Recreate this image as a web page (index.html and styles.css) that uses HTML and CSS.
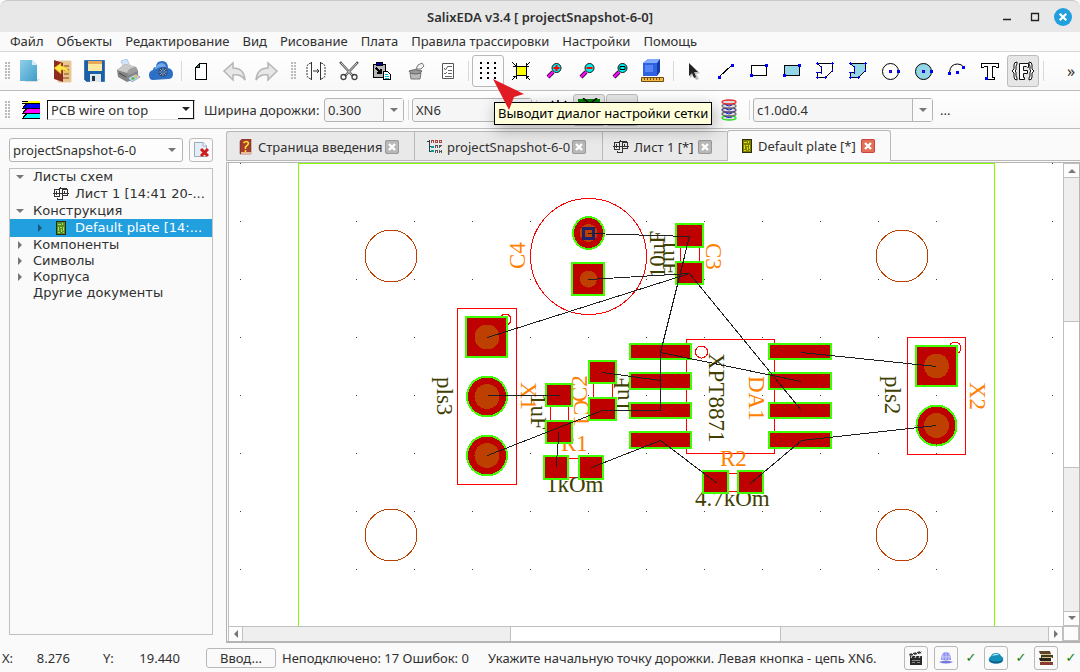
FILE: index.html
```html
<!DOCTYPE html>
<html lang="ru">
<head>
<meta charset="utf-8">
<title>SalixEDA v3.4 [ projectSnapshot-6-0]</title>
<link rel="stylesheet" href="styles.css">
</head>
<body>
<svg class="defs" aria-hidden="true">
  <defs>
    <linearGradient id="gBlue" x1="0" y1="0" x2="1" y2="1"><stop offset="0" stop-color="#8fd0ea"/><stop offset="1" stop-color="#3f9cc8"/></linearGradient>
    <pattern id="grid" x="240" y="221" width="58" height="58" patternUnits="userSpaceOnUse"><rect width="1" height="1" fill="#404040"/></pattern>
    <symbol id="sheet" viewBox="0 0 16 16"><path d="M1.500 3.500h5v7h-5zM9.500 3.500h5v6h-5zM4.500 12v1.500h5V10M0 7.500h16M3.500 5v4M11.500 5v3M7.500 1v2M6 2.500h8" fill="none" stroke="#333" shape-rendering="crispEdges"/></symbol>
    <symbol id="pcb" viewBox="0 0 12 16"><path d="M1.500 1.500h9v13h-9z" fill="var(--pcb)" stroke="#2c2c10" shape-rendering="crispEdges"/><path d="M3 4.500h3M3.500 7v4M5 7.500h2M7.500 3v2M6.500 9v3M8.500 7v4M3 12.500h2M8 12.500h1" fill="none" stroke="var(--trace)" shape-rendering="crispEdges"/></symbol>
    <symbol id="cross" viewBox="0 0 14 14"><path d="M4 4l6 6M10 4l-6 6" stroke="#fff" stroke-width="2.400"/></symbol>
  </defs>
</svg>
<header class="titlebar">
  <h1>SalixEDA v3.4 [ projectSnapshot-6-0]</h1>
  <div class="window-buttons">
    <button aria-label="Свернуть"><svg width="18" height="18"><path d="M5 11.500h8" stroke="#222" stroke-width="1.500"/></svg></button>
    <button aria-label="Развернуть"><svg width="18" height="18"><path d="M5.500 5.500h7v7h-7z" fill="none" stroke="#222" stroke-width="1.300"/></svg></button>
    <button aria-label="Закрыть"><svg width="18" height="18"><circle cx="9" cy="9" r="9" fill="#219fdf"/><path d="M5.700 5.700l6.600 6.600M12.300 5.700l-6.600 6.600" stroke="#fff" stroke-width="2.200"/></svg></button>
  </div>
</header>
<nav class="menubar">
  <button>Файл</button><button>Объекты</button><button>Редактирование</button><button>Вид</button><button>Рисование</button><button>Плата</button><button>Правила трассировки</button><button>Настройки</button><button>Помощь</button>
</nav>
<div class="toolbar tools">
  <span class="handle"></span>
  <button aria-label="Новый"><svg viewBox="0 0 24 24"><path d="M6 20l3 3h11l3-3z" fill="#ddd"/><path d="M3 1h12l5 5v16H3z" fill="url(#gBlue)"/><path d="M15 1v5h5z" fill="#d5eef8"/></svg></button>
  <button aria-label="Открыть"><svg viewBox="0 0 24 24"><path d="M8 2h13v21H8z" fill="#e8c48e" stroke="#e6cda6"/><path d="M14 7h5M14 11h5M14 15h5M13 19h6" stroke="#a76b3c" stroke-width="1.500"/><path d="M4 1l9 3v19l-9-3z" fill="#8e2b20"/><path d="M4 9l7-5v3q7 0 8 8-4-5-8-4v4z" fill="#ffe545" stroke="#d2a71b" stroke-width=".5"/></svg></button>
  <button aria-label="Сохранить"><svg viewBox="0 0 24 24"><path d="M1.500 1.500h20v21h-18l-2-2z" fill="#1b5fa8" stroke="#3d78b4"/><path d="M5 2h14v10H5z" fill="#ffe9a0"/><path d="M5 2h14v3H5z" fill="#e9a95b"/><path d="M7 15h11v8H7z" fill="#dfe6ec"/><path d="M9 17h3v5H9z" fill="#234"/></svg></button>
  <button aria-label="Печать"><svg viewBox="0 0 24 24"><path d="M5 2l6-2 3 7-6 2z" fill="#cfe5fb" stroke="#8eb0d4" stroke-width=".6"/><path d="M1 11l8-6 11 3 2 4v7l-11 4-9-5z" fill="#858585"/><path d="M1 11l8-6 11 3-9 6z" fill="#c9c9c9"/><path d="M11 14q1-5 9-6l2 4-9 4z" fill="#9e9e9e"/><path d="M3 14l7 4" stroke="#444"/><path d="M12 19l8-4 4 3-8 5z" fill="#bcd8fa" stroke="#789" stroke-width=".6"/><path d="M15 19l3-1 1 2-3 1z" fill="#54b83a"/><path d="M19 17l2 1" stroke="#f3ae26" stroke-width="2"/></svg></button>
  <button aria-label="Облако"><svg viewBox="0 0 24 24"><path d="M4 21q-4 0-4-5 0-4 4-5 0-3 3-3 0-6 6-6 6 0 6 7 5 1 5 6 0 5-5 5z" fill="#2d6fc4"/><path d="M5 11q3-7 8-7 4 1 4 4-6-1-12 3z" fill="#6da8e8"/><circle cx="14" cy="13" r="4.500" fill="#2c4668"/><path d="M14 9v8M10 13h8M11 10l6 6M17 10l-6 6" stroke="#b6d0ee" stroke-width=".7"/><circle cx="14" cy="13" r="1.500" fill="#2d6fc4"/></svg></button>
  <span class="sep"></span>
  <button aria-label="Лист"><svg viewBox="0 0 24 24" class="crisp"><path d="M10.500 4.500h7v16h-11v-12z" fill="#fff" stroke="#000"/><path d="M6.500 8.500l4-4v4z" fill="#17867d" stroke="#000"/></svg></button>
  <button aria-label="Отменить"><svg viewBox="0 0 24 24"><path d="M2 12l9-8v5q11 0 12 12-4-6-12-5v5z" fill="#e7e7e7" stroke="#b5b5b5" stroke-width="1.500"/></svg></button>
  <button aria-label="Повторить"><svg viewBox="0 0 24 24"><path d="M22 12l-9-8v5Q2 9 1 21q4-6 12-5v5z" fill="#e7e7e7" stroke="#b5b5b5" stroke-width="1.500"/></svg></button>
  <span class="handle wide"></span>
  <button aria-label="Отразить"><svg viewBox="0 0 24 24"><path d="M7 4q-4 1-4 4v8q0 3 4 4M17 4q4 1 4 4v8q0 3-4 4" fill="none" stroke="#333" stroke-dasharray="2 1"/><path d="M7.500 3v18M16.500 3v18M9 12h6M13 10l2 2-2 2" fill="none" stroke="#333"/></svg></button>
  <button aria-label="Вырезать"><svg viewBox="0 0 24 24"><path d="M3 3l13 14M21 3L8 17" stroke="#555" stroke-width="2.400"/><path d="M4 4l12 13M20 4L8 17" stroke="#eee" stroke-width=".8"/><circle cx="6.500" cy="18" r="2.500" fill="none" stroke="#444" stroke-width="1.300"/><circle cx="17.500" cy="18" r="2.500" fill="none" stroke="#444" stroke-width="1.300"/></svg></button>
  <button aria-label="Вставить"><svg viewBox="0 0 24 24" class="crisp"><path d="M3.500 5.500h12v13h-12z" fill="#b8b8b8" stroke="#000"/><path d="M6.500 3.500h6v3h-6z" fill="#0000a8" stroke="#000"/><path d="M6 9l5 5M11 10v4H7" stroke="#000" fill="none" stroke-width="1.500"/><path d="M13.500 12.500h4l3 3v5h-7z" fill="#fff" stroke="#000"/><path d="M15 15.500h3M15 17.500h4M15 19.500h4" stroke="#00b6c4"/></svg></button>
  <button aria-label="Удалить"><svg viewBox="0 0 24 24"><path d="M7 14h11l-1 6H8z" fill="#bbb" stroke="#777"/><path d="M6 12q6-3 13 0-1 3-6 3-6 0-7-3z" fill="#999" stroke="#666"/><path d="M13 10l2-4 4-2 2 3-3 3z" fill="#f4f4f4" stroke="#777"/></svg></button>
  <button aria-label="Свойства"><svg viewBox="0 0 24 24"><path d="M6.500 4.500h11v15h-11z" fill="#fff" stroke="#555"/><path d="M12 7.500h4M8 9l1.500 2 2.500-4M12 11.500h4M8 14l1 1 2-2M12 14.500h4M9 17.500h7" fill="none" stroke="#666"/></svg></button>
  <span class="sep"></span>
  <button class="outlined" aria-label="Сетка"><svg viewBox="0 0 24 24" class="crisp"><path d="M4 4h2M11 4h2M18 4h2M4 9h2M11 9h2M18 9h2M4 14h2M11 14h2M18 14h2M4 19h2M11 19h2M18 19h2" stroke="#000" stroke-width="2"/></svg></button>
  <button aria-label="Показать всё"><svg viewBox="0 0 24 24" class="crisp"><path d="M7.500 7.500h10v9h-10z" fill="#ff0" stroke="#000"/><path d="M3 3l4 4M21 3l-4 4M3 21l4-4M21 21l-4-4M7 4v3H4M17 4v3h3M7 20v-3H4M17 20v-3h3" fill="none" stroke="#000"/></svg></button>
  <button aria-label="Увеличить"><svg viewBox="0 0 24 24"><path d="M6 18l5-5" stroke="#000" stroke-width="4"/><path d="M6 18l5-5" stroke="#f0f" stroke-width="2.500"/><circle cx="14.500" cy="9" r="4.500" fill="#00f0f0" stroke="#111"/><path d="M11.500 9h6M14.500 6v6" stroke="#f00" stroke-width="2"/></svg></button>
  <button aria-label="Уменьшить"><svg viewBox="0 0 24 24"><path d="M6 18l5-5" stroke="#000" stroke-width="4"/><path d="M6 18l5-5" stroke="#f0f" stroke-width="2.500"/><circle cx="14.500" cy="9" r="4.500" fill="#00f0f0" stroke="#111"/><path d="M11.500 9h6" stroke="#f00" stroke-width="2"/></svg></button>
  <button aria-label="Область"><svg viewBox="0 0 24 24"><path d="M6 18l5-5" stroke="#000" stroke-width="4"/><path d="M6 18l5-5" stroke="#f0f" stroke-width="2.500"/><circle cx="14.500" cy="9" r="4.500" fill="#00f0f0" stroke="#111"/><path d="M12 7.500h5v3h-5z" fill="none" stroke="#000"/></svg></button>
  <button aria-label="3D"><svg viewBox="0 0 24 24"><path d="M2 4l5-4h12l-3 4v13H2z" fill="#2e62e0"/><path d="M2 4l5-4h12l-3 4z" fill="#82aaff"/><path d="M16 4l3-4v13l-3 4z" fill="#143aa5"/><path d="M4 6l8 0v7H4z" fill="#5484f5"/><path d="M.5 18.500h22v4H.5z" fill="#f0b83e" stroke="#6e4c18"/><path d="M3.500 19v2M6.500 19v2M9.500 19v2M12.500 19v2M15.500 19v2M18.500 19v2" stroke="#6e4c18"/></svg></button>
  <span class="sep"></span>
  <button aria-label="Выбор"><svg viewBox="0 0 24 24"><path d="M10 6l9 8-4 1 3 5-3 1-3-5-3 3z" fill="#bbb"/><path d="M8 4l9 9h-4l2 5-2 1-2-5-3 3z" fill="#222"/></svg></button>
  <button aria-label="Линия"><svg viewBox="0 0 24 24" class="crisp"><path d="M5 18L18 6" stroke="#000"/><path d="M4 17h3v3H4zM17 5h3v3h-3z" fill="#00f"/></svg></button>
  <button aria-label="Прямоугольник"><svg viewBox="0 0 24 24" class="crisp"><path d="M4.500 6.500h15v10h-15z" fill="#fff" stroke="#000"/><path d="M3 15h3v3H3zM18 5h3v3h-3z" fill="#00f"/></svg></button>
  <button aria-label="Залитый прямоугольник"><svg viewBox="0 0 24 24" class="crisp"><path d="M4.500 6.500h15v10h-15z" fill="#93d6e8" stroke="#000"/><path d="M3 15h3v3H3zM18 5h3v3h-3z" fill="#00f"/></svg></button>
  <button aria-label="Полигон"><svg viewBox="0 0 24 24" class="crisp"><path d="M4.500 4.500h15v7l-7 7h-8v-5h4v-5z" fill="#fff" stroke="#000"/><path d="M3 4h3v1H3zM4 3h1v3H4zM18 4h3v1h-3zM19 3h1v3h-1zM19 10h1v3h-1zM11 18h3v1h-3zM12 17h1v3h-1zM3 18h3v1H3zM4 17h1v3H4zM3 13h3v1H3zM8 7h1v3H8zM8 12h1v3H8z" fill="#00f"/></svg></button>
  <button aria-label="Залитый полигон"><svg viewBox="0 0 24 24" class="crisp"><path d="M4.500 4.500h15v7l-7 7h-8v-5h4v-5z" fill="#93d6e8" stroke="#000"/><path d="M3 4h3v1H3zM4 3h1v3H4zM18 4h3v1h-3zM19 3h1v3h-1zM19 10h1v3h-1zM11 18h3v1h-3zM12 17h1v3h-1zM3 18h3v1H3zM4 17h1v3H4zM3 13h3v1H3zM8 7h1v3H8zM8 12h1v3H8z" fill="#00f"/></svg></button>
  <button aria-label="Окружность"><svg viewBox="0 0 24 24"><circle cx="11.500" cy="12.500" r="8" fill="#fff" stroke="#000"/><path d="M10 11h3v3h-3zM18 11h3v3h-3z" fill="#00f"/><path d="M11 12h1v1h-1z" fill="red"/></svg></button>
  <button aria-label="Круг"><svg viewBox="0 0 24 24"><circle cx="11.500" cy="12.500" r="8" fill="#93d6e8" stroke="#000"/><path d="M10 11h3v3h-3zM18 11h3v3h-3z" fill="#00f"/><path d="M11 12h1v1h-1z" fill="red"/></svg></button>
  <button aria-label="Дуга"><svg viewBox="0 0 24 24"><path d="M4.500 13q1-8 8-8 4 0 6 3" fill="none" stroke="#000"/><path d="M3 13h3v3H3zM11 12h3v3h-3zM17 7h3v3h-3z" fill="#00f"/></svg></button>
  <button aria-label="Надпись"><svg viewBox="0 0 24 24" class="crisp"><path d="M3.500 4.500h17v4h-2l-1-1h-3v11h2v2h-9v-2h2v-11h-3l-1 1h-2z" fill="#fff" stroke="#000"/><path d="M7 18h3v3H7z" fill="#00f"/></svg></button>
  <button class="pressed" aria-label="Параметр" aria-pressed="true"><svg viewBox="0 0 24 24"><path d="M8.500 4.500h9v4h-1l-1-1h-3v4h4v3h-4v4h1v2h-5zM6 3q-3 0-3 3v4l-2 2 2 2v4q0 3 3 3v-2l-1-2v-4l-1-1 1-1V7l1-2zM18 3q3 0 3 3v4l2 2-2 2v4q0 3-3 3v-2l1-2v-4l1-1-1-1V7l-1-2z" fill="#fff" stroke="#111"/></svg></button>
  <span class="sep"></span>
  <button class="more" aria-label="Ещё">»</button>
</div>

<div class="toolbar options">
  <span class="handle"></span>
  <svg class="layers crisp" viewBox="0 0 18 18" width="18" height="18" aria-hidden="true"><path d="M1 0h17v2H3z" fill="#ff0"/><path d="M5 3h13v4H1z" fill="#00f"/><path d="M5 8h13v4H1z" fill="#f0f"/><path d="M5 13h13v4H1z" fill="#0ff"/><path d="M0 .5h6M0 2.500h18M5 2.500l-4 4M0 7.500h18M5 7.500l-4 4M0 12.500h18M5 12.500l-4 4M0 17.500h18" fill="none" stroke="#000"/></svg>
  <span class="motif"><select aria-label="Слой"><option>PCB wire on top</option></select><span class="motif-arrow"><i class="caret dark"></i></span></span>
  <label class="width-label" for="w">Ширина дорожки:</label>
  <span class="combo split w80"><select id="w"><option>0.300</option></select><span class="arrow"><i class="caret"></i></span></span>
  <span class="sep"></span>
  <span class="combo split w120"><select aria-label="Цепь"><option>XN6</option></select><span class="arrow"><i class="caret"></i></span></span>
  <span class="sep"></span>
  <button class="tool" aria-label="Шаг"><svg viewBox="0 0 24 24"><path d="M8 3l3 4M14 2v6M22 3l-3 4" stroke="#000" stroke-width="1.500"/></svg></button>
  <button class="tool pressed" aria-label="Трассировать"><svg viewBox="0 0 24 24"><path d="M1 1h22v19H1z" fill="#008000"/><path d="M6 0l6 5h2l6-5M2 5h7M17 5h6" stroke="#000" fill="none" stroke-width="1.500"/></svg></button>
  <button class="tool pressed" aria-label="Режим"></button>
  <span class="push"></span>
  <span class="sep"></span>
  <button class="tool" aria-label="Переходное"><svg viewBox="0 0 24 24"><g fill="#ddd" stroke-width="1.300"><ellipse cx="12" cy="20" rx="7" ry="2" stroke="#1fe01f"/><ellipse cx="12" cy="16" rx="7" ry="2" stroke="#666"/><ellipse cx="12" cy="12" rx="7" ry="2" stroke="#547"/><ellipse cx="12" cy="8" rx="7" ry="2" stroke="#777"/><ellipse cx="12" cy="4" rx="7" ry="2" stroke="#e22"/></g><path d="M9 6v1q3 2 6 0M9 10v1q3 2 6 0M9 14v1q3 2 6 0M9 18v1q3 1 6 0" fill="none" stroke="#22c"/></svg></button>
  <span class="sep"></span>
  <span class="combo split w180"><select aria-label="Тип переходного"><option>c1.0d0.4</option></select><span class="arrow"><i class="caret"></i></span></span>
  <button class="dots">...</button>
</div>

<main class="work">
  <aside class="side">
    <div class="project-row">
      <span class="combo project"><select aria-label="Проект"><option>projectSnapshot-6-0</option></select><span class="arrow"><i class="caret"></i></span></span>
      <button class="close-project" aria-label="Закрыть проект"><svg width="18" height="18" viewBox="0 0 18 18"><path d="M2.500 1.500h9l3 3v11h-12z" fill="#e4edf6" stroke="#9ab"/><path d="M11 1v4h4" fill="#fff" stroke="#9ab"/><path d="M9 8l7 7M16 8l-7 7" stroke="#d01c1c" stroke-width="3"/></svg></button>
    </div>
    <ul class="tree">
      <li><i class="down"></i>Листы схем</li>
      <li class="leaf"><svg width="16" height="16"><use href="#sheet"/></svg><span>Лист 1 [14:41 20-...</span></li>
      <li><i class="down"></i>Конструкция</li>
      <li class="leaf selected"><i class="right"></i><svg class="green" width="16" height="16"><use href="#pcb"/></svg><span>Default plate [14:...</span></li>
      <li><i class="right"></i>Компоненты</li>
      <li><i class="right"></i>Символы</li>
      <li><i class="right"></i>Корпуса</li>
      <li>Другие документы</li>
    </ul>
  </aside>
  <section class="docs">
    <div class="tabs" role="tablist">
      <div class="tab t1" role="tab"><svg width="14" height="16" viewBox="0 0 14 16"><path d="M1 2l2-2h9v15H1z" fill="#a43c30" stroke="#702018" stroke-width=".5"/><path d="M2 14h11" stroke="#e6b89c" stroke-width="2"/><path d="M4.500 4q3-3 5 0 0 2-3 4v2M6.500 11v2" fill="none" stroke="#ffe32a" stroke-width="1.600"/></svg><span>Страница введения</span><button aria-label="Закрыть вкладку"><svg width="14" height="14"><use href="#cross"/></svg></button></div>
      <div class="tab t2" role="tab"><svg class="crisp" width="15" height="15" viewBox="0 0 15 15"><path d="M2.500 1v12M2 7.500h3M2 12.500h3M0 2.500h3" stroke="#244" fill="none"/><path d="M4.500 4V1.500h2V4M8.500 4V1.500h2v2h-2M12.500 1v2h2V1h-2" stroke="#a44" fill="none"/><path d="M8.500 9V6.500h2V9M12.500 6v3M14.500 6l-2 2M8.500 14v-2.500h2V14M12.500 11v3M14.500 11v3M12 12.500h2" stroke="#555" fill="none"/><path d="M4 7h3v2H4zM4 11h3v2H4z" fill="#079a9a"/></svg><span>projectSnapshot-6-0</span><button aria-label="Закрыть вкладку"><svg width="14" height="14"><use href="#cross"/></svg></button></div>
      <div class="tab t3" role="tab"><svg width="16" height="16"><use href="#sheet"/></svg><span>Лист 1 [*]</span><button aria-label="Закрыть вкладку"><svg width="14" height="14"><use href="#cross"/></svg></button></div>
      <div class="tab t4 active" role="tab" aria-selected="true"><svg class="yellow" width="12" height="16"><use href="#pcb"/></svg><span>Default plate [*]</span><button aria-label="Закрыть вкладку"><svg width="14" height="14"><use href="#cross"/></svg></button></div>
    </div>
    <div class="viewport">
      <svg class="board" role="img" aria-label="Плата">
        <g transform="translate(-229 -163)">
          <rect x="229" y="163" width="2000" height="1500" fill="url(#grid)"/>
          <rect class="plate" x="298.500" y="163.500" width="696" height="1500"/>
          <g class="drill"><circle cx="391" cy="256" r="26"/><circle cx="902" cy="256" r="26"/><circle cx="391" cy="535" r="26"/><circle cx="902" cy="535" r="26"/></g>
          <g class="outline">
            <circle cx="588.500" cy="256.500" r="58"/><circle cx="505.500" cy="319.500" r="5.500"/><circle cx="701.500" cy="352" r="6"/><circle cx="955" cy="348" r="6"/>
            <rect x="457.500" y="308.500" width="59" height="176"/><rect x="907.500" y="337.500" width="58" height="117"/><rect x="686.500" y="339.500" width="88" height="114"/>
            <path d="M680.500 235v40M699.500 235v40M550.500 395v40M568.500 395v40M593.500 372v38M612.500 372v38M556 458.500h35M556 477.500h35M716 473.500h35M716 491.500h35"/>
          </g>
          <g class="value">
            <text transform="translate(665 278) rotate(-90)">10uF</text>
            <text transform="translate(663 239) rotate(90)">1uF</text>
            <text transform="translate(437 377) rotate(90)">pls3</text>
            <text transform="translate(531 394) rotate(90)">1uF</text>
            <text transform="translate(629 412) rotate(-90)">1uF</text>
            <text x="546" y="492">1kOm</text>
            <text transform="translate(709 353) rotate(90)">XPT8871</text>
            <text x="695" y="506">4.7kOm</text>
            <text transform="translate(885 376) rotate(90)">pls2</text>
          </g>
          <g class="ref">
            <text transform="translate(525 269) rotate(-90)">C4</text>
            <text transform="translate(706 243) rotate(90)">C3</text>
            <text transform="translate(521 382) rotate(90)">X1</text>
            <text transform="translate(587 402) rotate(-90)">C2</text>
            <text transform="translate(574 400) rotate(90)">C1</text>
            <text x="561" y="451">R1</text>
            <text transform="translate(749 376) rotate(90)">DA1</text>
            <text x="720" y="466">R2</text>
            <text transform="translate(970 382) rotate(90)">X2</text>
          </g>
          <g class="pad">
            <ellipse cx="588.500" cy="233" rx="15.500" ry="16"/><rect x="572" y="263" width="32" height="32"/>
            <rect x="676" y="224" width="27" height="23"/><rect x="676" y="262" width="27" height="22"/>
            <rect x="466" y="317" width="41" height="40"/><circle cx="487" cy="396.500" r="20"/><circle cx="487" cy="455.500" r="20"/>
            <rect x="546" y="384" width="26" height="22"/><rect x="546" y="421" width="26" height="22"/>
            <rect x="589" y="361" width="27" height="22"/><rect x="589" y="398" width="27" height="22"/>
            <rect x="544" y="456" width="24" height="23"/><rect x="579" y="456" width="24" height="23"/>
            <rect x="703" y="471" width="25" height="22"/><rect x="738" y="471" width="25" height="22"/>
            <rect x="630" y="344" width="61" height="15"/><rect x="630" y="373" width="61" height="16"/><rect x="630" y="403" width="61" height="15"/><rect x="630" y="432" width="61" height="16"/>
            <rect x="769" y="344" width="62" height="15"/><rect x="769" y="373" width="62" height="16"/><rect x="769" y="403" width="62" height="15"/><rect x="769" y="432" width="62" height="16"/>
            <rect x="916" y="346" width="41" height="40"/><circle cx="936.500" cy="425.500" r="20"/>
          </g>
          <g fill="#be4000" class="crisp"><circle cx="588.500" cy="233" r="9"/><circle cx="588.500" cy="279" r="8.500"/><circle cx="487" cy="337" r="12.500"/><circle cx="487" cy="396.500" r="12.500"/><circle cx="487" cy="455.500" r="12.500"/><circle cx="936.500" cy="366" r="12.500"/><circle cx="936.500" cy="425.500" r="12.500"/></g>
          <rect x="583.500" y="228.500" width="10" height="10" fill="none" stroke="#20206a" stroke-width="3" class="crisp"/>
          <path class="crisp" d="M588.500 233.500L689.500 236.500L660.500 352.500V410.500H602.500L487.500 455.500M588.500 279.500L689.500 273.500L487.500 337.500M689.500 273.500L801.500 410.500M660.500 352.500L801.500 381.500M602.500 372.500L660.500 380.500M487.500 395.500H559.500M559 432.500L556 467.500M591.500 467.500L660.500 440.500L717.500 483.500M750.500 483.500L801.500 440.500L936.500 425.500M801.500 352.500L936.500 366.500" fill="none" stroke="#202020"/>
        </g>
      </svg>
      <div class="vscroll"><span class="btn"><i class="up"></i></span><span class="track"></span><span class="thumb"></span><span class="track"></span><span class="btn"><i class="down"></i></span></div>
      <div class="hscroll"><span class="btn"><i class="left"></i></span><span class="track"></span><span class="thumb"></span><span class="track"></span><span class="btn"><i class="right"></i></span></div>
      <div class="corner"></div>
    </div>
  </section>
</main>

<footer class="status">
  <span class="axis">X:</span><span class="coord">8.276</span><span class="axis">Y:</span><span class="coord">19.440</span>
  <button class="enter">Ввод...</button>
  <span class="net">Неподключено: 17 Ошибок: 0</span>
  <span class="hint">Укажите начальную точку дорожки. Левая кнопка - цепь XN6.</span>
  <div class="indicators">
    <button aria-label="Видео"><svg viewBox="0 0 16 16"><path d="M2 6h12v9H2z" fill="#292929"/><path d="M1 4l12-3 1 2L2 6z" fill="#333"/><path d="M4 3l2 2M8 2l2 2M12 1l2 2M4 6l-1 2M8 6L7 8M12 6l-1 2" stroke="#eee"/><path d="M4 10.500h8M4 12.500h3M9 12.500h3" stroke="#888"/></svg></button>
    <button aria-label="Сеть"><svg viewBox="0 0 16 16"><path d="M3 10q0-8 5-8 5 0 5 8z" fill="#8d91ef"/><path d="M8 2v9M5 4v6M11 4v6M3 7h10" stroke="#d9dbff" stroke-width=".8"/><path d="M1 12q7-3 14 0-7 3-14 0z" fill="#7478dc"/></svg></button><b>✓</b>
    <button aria-label="Облако"><svg viewBox="0 0 16 16"><path d="M2 12q-3-3 1-6 1-3 5-3 4 0 5 3 4 2 1 6-6 3-12 0z" fill="#1590ba"/><path d="M4 6q3-4 7-1-4 0-7 1z" fill="#a9ecff"/><path d="M1 10q7 3 14 0l-1 2q-6 3-12 0z" fill="#0b5e88"/></svg></button><b>✓</b>
    <button aria-label="Библиотека"><svg viewBox="0 0 16 16"><path d="M1 1h11l1 3H2z" fill="#5b482b"/><path d="M3 5h12v3H3z" fill="#3b3b20"/><path d="M1 8h12v3H2z" fill="#25251c"/><path d="M2 12h13v3H2z" fill="#893d32"/><path d="M3 4.500h10M4 7.500h10M3 11.500h10" stroke="#ddc28e"/></svg></button><b>✓</b>
  </div>
</footer>
<div class="tooltip" role="tooltip">Выводит диалог настройки сетки</div>
<svg class="pointer" width="34" height="34" aria-hidden="true"><path d="M1 1l31 15-10 3-5 13z" fill="#e01b24"/></svg>
</body>
</html>
```
FILE: styles.css
```css
* { box-sizing: border-box; }
html, body { height: 100%; }
body {
  margin: 0;
  display: flex;
  flex-direction: column;
  overflow: hidden;
  background: #fafafa;
  color: #303030;
  font: 13px/16px "Noto Sans", "Open Sans", sans-serif;
}
button, select { font: inherit; color: inherit; margin: 0; padding: 0; border: 0; background: none; }
svg { display: block; flex: none; }
.defs { position: absolute; width: 0; height: 0; }
.crisp { shape-rendering: crispEdges; }

.titlebar {
  display: grid;
  grid-template-columns: 100px 1fr 100px;
  align-items: center;
  height: 32px;
  flex: none;
  background: #e8e8e8;
  border-top: 1px solid #c8c8c8;
  border-radius: 8px 8px 0 0;
}
.titlebar h1 { grid-column: 2; margin: 0; text-align: center; font-size: 13px; line-height: 18px; font-weight: 600; }
.window-buttons { display: flex; justify-content: flex-end; gap: 10px; padding-right: 8px; }

.menubar { display: flex; flex: none; height: 20px; align-items: center; padding: 0 0 2px 10px; gap: 13px; border-bottom: 1px solid #d8d8d8; }
.menubar button { white-space: nowrap; }

.toolbar { display: flex; flex: none; align-items: center; gap: 1px; padding-left: 5px; border-bottom: 1px solid #bcbcbc; background: linear-gradient(#fff, #f8f8f8); }
.toolbar > * { flex: none; }
.tools { height: 39px; }
.options { height: 38px; }
.handle { width: 7px; height: 18px; background: radial-gradient(circle at 1px 1px, #bbb 0 1px, transparent 1px) 0 0 / 3px 3px repeat-y, radial-gradient(circle at 1px 1px, #bbb 0 1px, transparent 1px) 3px 0 / 3px 3px repeat-y; }
.handle.wide { width: 15px; background-position: 7px 0, 10px 0; }
.tools button, .tool { width: 32px; height: 32px; display: grid; place-items: center; border: 1px solid transparent; border-radius: 3px; }
.tools button svg, .tool svg { width: 24px; height: 24px; }
.tools .outlined { border-color: #b8b8b8; background: #fcfcfc; }
.tools .pressed, .tool.pressed { border-color: #bcbcbc; background: #e6e6e6; }
.tools .more { margin-left: auto; width: 18px; font-size: 16px; }
.sep { width: 6px; height: 20px; background: linear-gradient(#d8d8d8, #d8d8d8) 3px 0 / 1px 100% no-repeat; }

.layers { margin: 0 6px 0 9px; }
.motif { display: grid; width: 148px; height: 20px; border: 1px solid #ddd; border-top-color: #111; border-left-color: #111; background: #fff; }
.motif select, .combo select { grid-area: 1 / 1; appearance: none; width: 100%; height: 100%; min-width: 0; outline: 0; }
.motif select { padding-left: 3px; }
.motif-arrow { grid-area: 1 / 1; justify-self: end; width: 16px; display: grid; place-items: center; border-right: 1px solid #111; border-bottom: 1px solid #111; pointer-events: none; }
.width-label { margin: 0 7px 0 8px; width: 112px; white-space: nowrap; }
.combo { display: grid; height: 24px; border: 1px solid #b4b4b4; border-radius: 3px; background: #f6f6f6; }
.combo select { padding-left: 3px; }
.combo .arrow { grid-area: 1 / 1; justify-self: end; width: 20px; display: grid; place-items: center; pointer-events: none; }
.split .arrow { border-left: 1px solid #b4b4b4; background: #fafafa; }
.w80 { width: 80px; }
.w120 { width: 120px; }
.w180 { width: 180px; }
.dots { margin-left: 6px; }
.push { width: 66px; }
.caret, i.down { border: solid transparent; border-width: 4px 4px 0; border-top-color: #777; }
.caret.dark { border-top-color: #222; }
i.up { border: solid transparent; border-width: 0 4px 4px; border-bottom-color: #777; }
i.right { border: solid transparent; border-width: 4px 0 4px 4px; border-left-color: #777; }
i.left { border: solid transparent; border-width: 4px 4px 4px 0; border-right-color: #777; }

.work { flex: 1; min-height: 0; display: grid; grid-template-columns: 226px 1fr; }
.side { display: flex; flex-direction: column; gap: 6px; padding: 9px 13px 8px 9px; min-height: 0; }
.project-row { display: flex; gap: 6px; }
.project { flex: 1; background: #fdfdfd; }
.close-project { width: 24px; display: grid; place-items: center; border: 1px solid #bcbcbc; border-radius: 3px; }
.tree { flex: 1; margin: 0; padding: 0; list-style: none; border: 1px solid #c0c0c0; font: 13px/16px "DejaVu Sans", sans-serif; overflow: hidden; }
.tree li { position: relative; display: flex; align-items: center; height: 16px; padding-left: 23px; white-space: nowrap; }
.tree li > i { position: absolute; left: 6px; }
.tree li > i.right { left: 8px; }
.tree .leaf { height: 18px; padding-left: 43px; }
.tree .leaf > i.right { left: 28px; border-left-color: #14587c; }
.tree .leaf svg { margin-right: 6px; }
.tree .selected { background: #219fdf; color: #fff; }
.green { --pcb: #56902c; --trace: #a9dd54; }
.yellow { --pcb: #7f8000; --trace: #e0e000; }

.docs { display: flex; flex-direction: column; min-width: 0; min-height: 0; padding-top: 1px; }
.tabs { display: flex; align-items: flex-end; height: 31px; flex: none; border-bottom: 1px solid #b8b8b8; }
.tab { display: flex; align-items: center; height: 29px; border: 1px solid #b8b8b8; border-right: 0; border-bottom: 0; background: #e9e9e9; padding: 1px 10px 0 12px; white-space: nowrap; }
.tab span { flex: 1; margin-left: 5px; }
.tab button { width: 14px; height: 14px; border-radius: 2px; background: #b8b8b8; outline: 1px solid #999; outline-offset: -1px; }
.tab.t1 { width: 188px; padding-right: 15px; border-radius: 3px 0 0; }
.tab.t2 { width: 188px; padding-right: 16px; }
.tab.t3 { width: 125px; padding: 1px 15px 0 10px; }
.tab.active { width: 164px; height: 31px; margin-bottom: -1px; border-right: 1px solid #b8b8b8; border-radius: 3px 3px 0 0; background: #fafafa; padding: 0 15px 0 13px; }
.tab.active button { background: #e47155; outline-color: #c44; }
.viewport { flex: 1; min-height: 0; display: grid; grid-template: 1fr 15px / 1fr 16px; border: 1px solid #b4b4b4; border-width: 1px 1px 2px; margin: 1px 0 0; padding-left: 1px; }
.board { width: 100%; height: 100%; background: #fff; overflow: hidden; min-height: 0; border-left: 1px solid #c0c0c0; }
.plate { fill: none; stroke: #80ff00; stroke-width: 1px; shape-rendering: crispEdges; }
.drill { fill: none; stroke: #be4000; shape-rendering: crispEdges; }
.outline { fill: none; stroke: #f00; shape-rendering: crispEdges; }
.pad { fill: #be0000; stroke: #40ff00; stroke-width: 2px; shape-rendering: crispEdges; }
.value, .ref { font: 23px/24px "Liberation Serif", serif; }
.value { fill: #404000; }
.ref { fill: #ff8000; }
.vscroll, .hscroll { display: flex; background: #efefef; }
.vscroll { flex-direction: column; border-left: 1px solid #c0c0c0; }
.hscroll { border-top: 1px solid #c0c0c0; }
.btn { flex: 0 0 15px; display: grid; place-items: center; background: #fcfcfc; border: 0 solid #c0c0c0; }
.track { flex: 144; }
.thumb { flex: 146; background: #fff; border: 0 solid #c0c0c0; }
.vscroll .thumb { border-width: 1px 0; }
.hscroll .thumb { border-width: 0 1px; }
.hscroll .track { flex: 267; }
.hscroll .thumb { flex: 270; }
.vscroll .btn { border-width: 1px 0; }
.hscroll .btn { border-width: 0 1px; }
.corner { background: #fcfcfc; border: 1px solid #c0c0c0; }

.status { display: flex; flex: none; align-items: center; height: 29px; padding: 1px 2px 0 2px; white-space: nowrap; }
.axis { width: 22px; }
.coord { width: 46px; text-align: right; margin-right: 33px; }
.coord ~ .coord { width: 55px; margin-right: 26px; }
.enter { width: 70px; height: 20px; border: 1px solid #b8b8b8; border-radius: 3px; }
.net { margin-left: 6px; }
.hint { margin-left: 19px; }
.indicators { display: flex; align-items: center; gap: 6px; margin-left: auto; }
.indicators button { width: 24px; height: 24px; display: grid; place-items: center; border: 1px solid #b8b8b8; border-radius: 3px; }
.indicators svg { width: 16px; height: 16px; }
.indicators b { width: 14px; text-align: center; color: #108010; font: 13px/16px "DejaVu Sans", sans-serif; }

.tooltip { position: absolute; left: 494px; top: 102px; height: 23px; padding: 2px 3px; border: 1px solid #000; background: #ffffdc; color: #000; line-height: 17px; white-space: nowrap; box-shadow: 2px 4px 16px rgba(0, 0, 0, .3); }
.pointer { position: absolute; left: 492px; top: 78px; }
```
